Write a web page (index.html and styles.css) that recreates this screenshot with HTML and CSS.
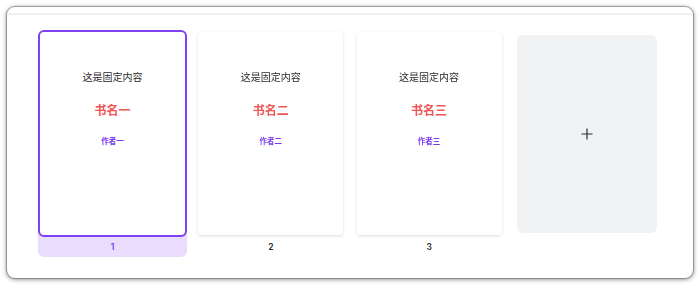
FILE: index.html
```html
<!DOCTYPE html>
<html lang="zh-CN">
<head>
<meta charset="utf-8">
<title>书籍页面</title>
<link rel="stylesheet" href="styles.css">
</head>
<body>
<div class="window">
  <div class="topbar"></div>
  <div class="row">
    <div class="item active">
      <div class="card">
        <div class="fixed">这是固定内容</div>
        <div class="title">书名一</div>
        <div class="author">作者一</div>
      </div>
      <div class="label">1</div>
    </div>
    <div class="item">
      <div class="card">
        <div class="fixed">这是固定内容</div>
        <div class="title">书名二</div>
        <div class="author">作者二</div>
      </div>
      <div class="label">2</div>
    </div>
    <div class="item">
      <div class="card">
        <div class="fixed">这是固定内容</div>
        <div class="title">书名三</div>
        <div class="author">作者三</div>
      </div>
      <div class="label">3</div>
    </div>
    <div class="item add-slot">
      <div class="add">
        <svg width="12" height="12" viewBox="0 0 12 12"><path d="M6 0.5V11.5M0.5 6H11.5" stroke="#2b2b2b" stroke-width="1.2" fill="none"/></svg>
      </div>
    </div>
  </div>
</div>
</body>
</html>
```
FILE: styles.css
```css
html, body {
  margin: 0;
  padding: 0;
  background: #ffffff;
}
body {
  width: 700px;
  height: 285px;
  overflow: hidden;
  font-family: "Noto Sans CJK SC", "Noto Sans", sans-serif;
}
.window {
  margin: 7px;
  width: 686px;
  height: 271px;
  box-sizing: border-box;
  background: #fff;
  border-radius: 8px;
  box-shadow: 0 0 1px 1px rgba(0,0,0,0.3), 0 1px 4px 1px rgba(0,0,0,0.35);
  overflow: hidden;
}
.topbar {
  height: 6px;
  border-bottom: 2px solid #f1f1f1;
}
.row {
  display: flex;
  gap: 9.3px;
  padding: 15px 0 0 31px;
  align-items: flex-start;
}
.item {
  width: 149px;
  display: flex;
  flex-direction: column;
}
.card {
  position: relative;
  z-index: 1;
  height: 165px;
  padding-top: 38px;
  border: 2px solid transparent;
  border-radius: 6px;
  background: #fff;
  background-clip: padding-box;
  filter: drop-shadow(0 1px 1.5px rgba(0,0,0,0.13));
  display: flex;
  flex-direction: column;
  align-items: center;
}
.active .card {
  border-color: #8042f0;
  filter: none;
}
.fixed {
  font-size: 10px;
  line-height: 14px;
  color: #2a2a2a;
}
.title {
  margin-top: 18px;
  font-size: 12px;
  line-height: 16px;
  font-weight: 700;
  color: #f05454;
}
.author {
  margin-top: 18px;
  font-size: 7.5px;
  line-height: 10px;
  font-weight: 700;
  color: #7c3aed;
}
.label {
  margin-top: -6px;
  padding-top: 6px;
  height: 20px;
  line-height: 20px;
  text-align: center;
  font-family: Inter, "Noto Sans", sans-serif;
  font-size: 8.5px;
  font-weight: 600;
  color: #2a2a2a;
  border-radius: 0 0 6px 6px;
}
.active .label {
  background: #e9dcfd;
  color: #7c3aed;
}
.add-slot {
  align-items: center;
}
.add {
  margin-top: 5px;
  width: 140px;
  height: 198px;
  border-radius: 6px;
  background: #f1f2f4;
  display: flex;
  align-items: center;
  justify-content: center;
}
```
